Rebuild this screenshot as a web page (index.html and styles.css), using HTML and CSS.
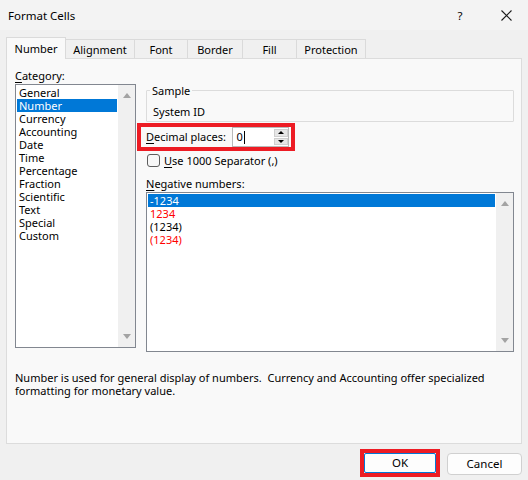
FILE: index.html
```html
<!DOCTYPE html>
<html lang="en">
<head>
    <meta charset="UTF-8">
    <meta name="viewport" content="width=device-width, initial-scale=1.0">
    <title>Format Cells</title>
    <link rel="stylesheet" href="styles.css">
</head>
<body>
    <div class="dialog">
        <div class="titlebar">
            <span class="title">Format Cells</span>
            <span class="help">?</span>
            <span class="close">
                <svg width="11" height="11" viewBox="0 0 11 11"><path d="M0.5 0.5 L10.5 10.5 M10.5 0.5 L0.5 10.5" stroke="#1a1a1a" stroke-width="1.1" fill="none"/></svg>
            </span>
        </div>

        <div class="tabs">
            <div class="tab active">Number</div>
            <div class="tab">Alignment</div>
            <div class="tab">Font</div>
            <div class="tab">Border</div>
            <div class="tab">Fill</div>
            <div class="tab">Protection</div>
        </div>

        <div class="panel">
            <div class="columns">
                <div class="category">
                    <div class="field-label"><u>C</u>ategory:</div>
                    <div class="listbox cat-list">
                        <ul class="items">
                            <li>General</li>
                            <li class="selected">Number</li>
                            <li>Currency</li>
                            <li>Accounting</li>
                            <li>Date</li>
                            <li>Time</li>
                            <li>Percentage</li>
                            <li>Fraction</li>
                            <li>Scientific</li>
                            <li>Text</li>
                            <li>Special</li>
                            <li>Custom</li>
                        </ul>
                        <div class="scrollbar">
                            <span class="arrow up"></span>
                            <span class="arrow down"></span>
                        </div>
                    </div>
                </div>

                <div class="options">
                    <fieldset class="sample">
                        <legend>Sample</legend>
                        <div class="sample-value">System ID</div>
                    </fieldset>

                    <div class="decimal-row highlight">
                        <span class="decimal-label"><u>D</u>ecimal places:</span>
                        <span class="number-input">0<span class="caret"></span></span>
                        <span class="spinner">
                            <span class="spin-btn"><span class="tri up"></span></span>
                            <span class="spin-btn"><span class="tri down"></span></span>
                        </span>
                    </div>

                    <label class="check-row">
                        <span class="checkbox"></span>
                        <span><u>U</u>se 1000 Separator (,)</span>
                    </label>

                    <div class="field-label neg-label"><u>N</u>egative numbers:</div>
                    <div class="listbox neg-list">
                        <ul class="items">
                            <li class="selected">-1234</li>
                            <li class="red">1234</li>
                            <li>(1234)</li>
                            <li class="red">(1234)</li>
                        </ul>
                        <div class="scrollbar">
                            <span class="arrow up"></span>
                            <span class="arrow down"></span>
                        </div>
                    </div>
                </div>
            </div>

            <p class="description">Number is used for general display of numbers.&nbsp; Currency and Accounting offer specialized<br>formatting for monetary value.</p>
        </div>

        <div class="footer">
            <div class="highlight ok-wrap"><button class="btn default">OK</button></div>
            <button class="btn cancel">Cancel</button>
        </div>
    </div>
</body>
</html>
```

FILE: styles.css
```css
body {
    margin: 0;
    background: #f0f0f0;
    font-family: "Noto Sans", "Open Sans", sans-serif;
    font-size: 11px;
    color: #000;
}
.dialog {
    width: 528px;
    height: 480px;
    overflow: hidden;
}
u {
    text-decoration-thickness: 1px;
    text-underline-offset: 2px;
}

/* title bar */
.titlebar {
    height: 30px;
    display: flex;
    align-items: center;
    padding-left: 8px;
    background: #f3f3f3;
    font-size: 11.5px;
}
.title {
    flex: 1;
    line-height: 13px;
}
.help {
    width: 12px;
    text-align: center;
    margin-right: 35px;
}
.close {
    width: 11px;
    height: 11px;
    margin-right: 16px;
    display: flex;
}

/* tabs */
.tabs {
    height: 28px;
    display: flex;
    align-items: flex-end;
    padding-left: 6px;
}
.tab {
    height: 19px;
    line-height: 20px;
    text-align: center;
    border: 1px solid #dadada;
    border-bottom: none;
    border-left: none;
    box-sizing: border-box;
    background: #f0f0f0;
}
.tab.active {
    height: 22px;
    line-height: 21px;
    margin-bottom: -1px;
    background: #f9f9f9;
    border-left: 1px solid #dadada;
    position: relative;
    z-index: 1;
}
.tab:nth-child(1) { width: 60px; }
.tab:nth-child(2) { width: 69px; }
.tab:nth-child(3) { width: 53px; }
.tab:nth-child(4) { width: 55px; }
.tab:nth-child(5) { width: 54px; }
.tab:nth-child(6) { width: 69px; }

/* main panel */
.panel {
    margin: 0 6px;
    height: 386px;
    box-sizing: border-box;
    background: #f9f9f9;
    border: 1px solid #dcdcdc;
    padding: 10px 7px 0 8px;
}
.columns {
    display: flex;
    gap: 10px;
    align-items: flex-start;
}
.category {
    width: 121px;
}
.options {
    width: 368px;
}
.field-label {
    line-height: 13px;
    margin-bottom: 2px;
}

/* list boxes */
.listbox {
    display: flex;
    background: #fff;
    border: 1px solid #828790;
    box-sizing: border-box;
}
.cat-list {
    height: 264px;
}
.neg-list {
    height: 160px;
}
.items {
    flex: 1;
    list-style: none;
    margin: 0;
    padding: 1px;
}
.items li {
    height: 13px;
    line-height: 13px;
    padding-left: 2px;
    white-space: nowrap;
}
.items li.selected {
    background: #0078d7;
    color: #fff;
}
.items li.red {
    color: #ff0000;
}
.scrollbar {
    width: 17px;
    background: #f0f0f0;
    display: flex;
    flex-direction: column;
    justify-content: space-between;
    align-items: center;
    padding: 8px 0;
}
.arrow {
    width: 0;
    height: 0;
    border-left: 4px solid transparent;
    border-right: 4px solid transparent;
}
.arrow.up {
    border-bottom: 5px solid #a3a3a3;
}
.arrow.down {
    border-top: 5px solid #a3a3a3;
}

/* sample group */
.sample {
    margin: 15px 0 0;
    padding: 0 0 3px 3px;
    border: 1px solid #dcdcdc;
    border-radius: 1px;
}
.sample legend {
    padding: 0 2px;
    line-height: 13px;
}
.sample-value {
    margin-top: 8px;
    padding-left: 3px;
    line-height: 13px;
}

.highlight {
    border: 4px solid #ed1c24;
    box-sizing: border-box;
}
.decimal-row {
    margin: 1px 0 0 -9px;
    width: 158px;
    height: 28px;
    display: flex;
    align-items: stretch;
    padding: 0 2px 0 5px;
}
.decimal-label {
    width: 87px;
    line-height: 20px;
    white-space: nowrap;
}
.number-input {
    width: 42px;
    box-sizing: border-box;
    background: #fff;
    border: 1px solid #b9b9b9;
    border-right: none;
    line-height: 18px;
    padding-left: 3px;
    display: flex;
    align-items: center;
}
.caret {
    width: 1px;
    height: 13px;
    background: #000;
    margin-left: 1px;
}
.spinner {
    width: 14px;
    display: flex;
    flex-direction: column;
    background: #fff;
    border: 1px solid #b9b9b9;
    border-left: none;
    padding: 1px 0;
    gap: 1px;
}
.spin-btn {
    flex: 1;
    background: #e6e6e6;
    border: 1px solid #cfcfcf;
    display: flex;
    align-items: center;
    justify-content: center;
}
.tri {
    width: 0;
    height: 0;
    border-left: 3px solid transparent;
    border-right: 3px solid transparent;
}
.tri.up {
    border-bottom: 3px solid #000;
}
.tri.down {
    border-top: 3px solid #000;
}

/* checkbox */
.check-row {
    display: flex;
    align-items: center;
    gap: 4px;
    margin: 3px 0 0 1px;
    line-height: 13px;
}
.checkbox {
    width: 13px;
    height: 13px;
    box-sizing: border-box;
    border: 1px solid #5d5d5d;
    border-radius: 3px;
    background: #f7f7f7;
}
.neg-label {
    margin-top: 10px;
}

.description {
    margin: 19px 0 0;
    line-height: 13px;
    white-space: nowrap;
}

/* dialog buttons */
.footer {
    display: flex;
    justify-content: flex-end;
    align-items: flex-start;
    gap: 7px;
    padding: 5px 6px 0 0;
}
.ok-wrap {
    width: 80px;
    height: 28px;
    display: flex;
}
.btn {
    font: inherit;
    font-size: 11.5px;
    color: #000;
    background: #fdfdfd;
    border: 1px solid #d0d0d0;
    border-radius: 4px;
    padding: 0;
    line-height: 18px;
}
.btn.default {
    flex: 1;
    border-color: #0078d7;
    border-radius: 2px;
}
.btn.cancel {
    width: 75px;
    height: 22px;
    margin-top: 4px;
}
```
